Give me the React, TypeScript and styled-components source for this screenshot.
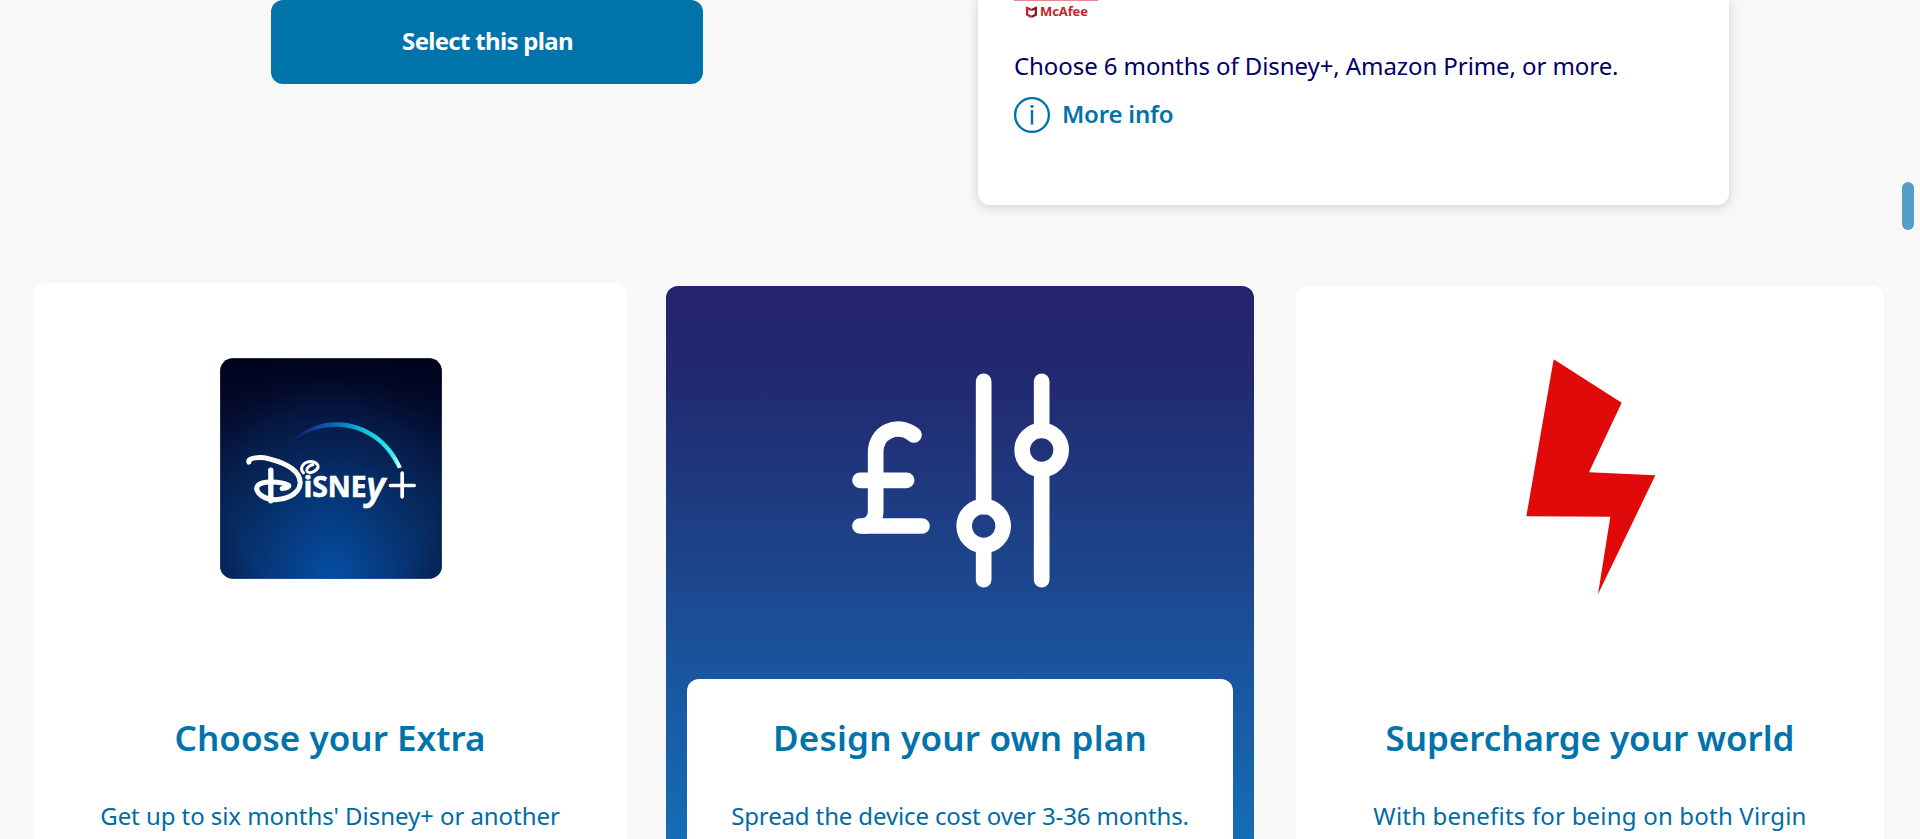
import React from "react";
import styled, { createGlobalStyle } from "styled-components";

const GlobalStyle = createGlobalStyle`
  * { box-sizing: border-box; }
  body {
    margin: 0;
    background: #f8f8f8;
    font-family: "Noto Sans", "Open Sans", sans-serif;
    overflow: hidden;
  }
`;

const Page = styled.main`
  position: relative;
  height: 839px;
  overflow: hidden;
  background: #f8f8f8;
`;

const PlanRow = styled.section`
  display: flex;
  align-items: flex-start;
  justify-content: space-between;
  height: 205px;
  padding: 0 191px 0 271px;
`;

const SelectButton = styled.button`
  width: 432px;
  height: 84px;
  padding: 0 0 3px 1px;
  border: 0;
  border-radius: 12px;
  background: #0073ab;
  color: #fff;
  font: 700 24px/32px "Noto Sans", sans-serif;
  letter-spacing: -0.69px;
`;

const PlanPanel = styled.div`
  width: 751px;
  height: 205px;
  padding: 0 36px;
  border-radius: 0 0 12px 12px;
  background: #fff;
  box-shadow: 0 2px 12px rgba(0, 0, 0, 0.17);
`;

const BrandTile = styled.div`
  display: flex;
  align-items: flex-start;
  gap: 3px;
  width: 84px;
  height: 50px;
  padding: 5px 0 0 12px;
  border-top: 1px solid #e38a8e;
  color: #c3262b;
  font: 700 13px/11px "Noto Sans", sans-serif;
  letter-spacing: -0.1px;
`;

const PlanText = styled.p`
  margin: 0;
  color: #000066;
  font-size: 24px;
  line-height: 32px;
  letter-spacing: -0.08px;
  white-space: nowrap;
`;

const MoreInfo = styled.a`
  display: flex;
  align-items: center;
  gap: 12px;
  height: 36px;
  margin-top: 15px;
  color: #0073ab;
  font-size: 24px;
  font-weight: 650;
  line-height: 32px;
  letter-spacing: -0.2px;
`;

const MoreInfoLabel = styled.span`
  padding-bottom: 2px;
`;

const Cards = styled.section`
  display: grid;
  grid-template-columns: 594px 588px 1fr;
  column-gap: 39px;
  align-items: end;
  height: 700px;
  margin-top: 78px;
  padding: 0 36px 0 33px;
`;

const Card = styled.article<{ $raised?: boolean; $featured?: boolean }>`
  justify-self: end;
  width: ${(p) => (p.$raised ? 594 : 588)}px;
  height: ${(p) => (p.$raised ? 700 : 697)}px;
  padding: 0 21px;
  border-radius: 12px;
  background: ${(p) =>
    p.$featured
      ? "linear-gradient(180deg, #25236b 0, #22296f 90px, #1f377e 190px, #1c4990 310px, #1957a0 395px, #146db5 553px)"
      : "#fff"};
`;

const Artwork = styled.div<{ $raised?: boolean; $top: number; $shift?: number }>`
  display: flex;
  justify-content: center;
  height: ${(p) => (p.$raised ? 396 : 393)}px;
  padding-top: ${(p) => p.$top}px;
  padding-left: ${(p) => p.$shift ?? 0}px;
`;

const CardBody = styled.div`
  height: 304px;
  padding-top: 35px;
  border-radius: 12px 12px 0 0;
  background: #fff;
  color: #0073ab;
  text-align: center;
  white-space: nowrap;
`;

const CardTitle = styled.h2<{ $tracking: number }>`
  margin: 0 0 38px;
  font-size: 35px;
  font-weight: 600;
  line-height: 48px;
  letter-spacing: ${(p) => p.$tracking}px;
`;

const CardText = styled.p<{ $tracking: number }>`
  margin: 0;
  color: #006ca5;
  font-size: 24px;
  line-height: 32px;
  letter-spacing: ${(p) => p.$tracking}px;
`;

const ScrollThumb = styled.div`
  position: absolute;
  top: 182px;
  right: 6px;
  width: 12px;
  height: 48px;
  border-radius: 6px;
  background: #549fc5;
`;

const ShieldIcon = () => (
  <svg width="11" height="12" viewBox="0 0 11 12" fill="none">
    <path d="M0 0.3 L5.5 2.8 V5.2 L2.3 3.8 V8.1 L5.5 9.6 V12 L0 9.4 Z" fill="#c3262b" />
    <path d="M11 0.3 L5.5 2.8 V5.2 L8.7 3.8 V8.1 L5.5 9.6 V12 L11 9.4 Z" fill="#86191d" />
  </svg>
);

const InfoIcon = () => (
  <svg width="36" height="36" viewBox="0 0 36 36" fill="none">
    <circle cx="18" cy="18" r="16.9" stroke="#0073ab" strokeWidth="2.3" />
    <rect x="16.8" y="13" width="2.4" height="14.5" fill="#0073ab" />
    <rect x="16.4" y="8" width="3.2" height="2.8" rx="1" fill="#0073ab" />
  </svg>
);

const DisneyLogo = () => (
  <svg width="222" height="221" viewBox="59.5 53.5 666 663">
    <defs>
      <linearGradient id="night" x1="0" y1="0" x2="0" y2="1">
        <stop offset="0" stopColor="#02031f" />
        <stop offset="0.4" stopColor="#061843" />
        <stop offset="0.75" stopColor="#07295c" />
        <stop offset="1" stopColor="#083070" />
      </linearGradient>
      <radialGradient id="glow" cx="0.5" cy="1" r="0.95" gradientTransform="translate(.5 1) scale(.75 1) translate(-.5 -1)">
        <stop offset="0" stopColor="#054fa4" />
        <stop offset="0.35" stopColor="#063e86" stopOpacity="0.8" />
        <stop offset="0.7" stopColor="#062c63" stopOpacity="0.4" />
        <stop offset="1" stopColor="#062050" stopOpacity="0" />
      </radialGradient>
      <radialGradient id="edge" cx="0.5" cy="0.65" r="0.8">
        <stop offset="0.55" stopColor="#01021c" stopOpacity="0" />
        <stop offset="1" stopColor="#01021c" stopOpacity="0.6" />
      </radialGradient>
      <linearGradient id="arc" x1="250" y1="0" x2="602" y2="0" gradientUnits="userSpaceOnUse">
        <stop offset="0" stopColor="#10207c" stopOpacity="0" />
        <stop offset="0.2" stopColor="#122f94" />
        <stop offset="0.45" stopColor="#0a6cb8" />
        <stop offset="0.7" stopColor="#10c4dc" />
        <stop offset="0.93" stopColor="#2ef0ed" />
        <stop offset="1" stopColor="#fff" />
      </linearGradient>
    </defs>
    <rect x="60" y="54" width="665" height="662" rx="38" fill="url(#night)" />
    <rect x="60" y="54" width="665" height="662" rx="38" fill="url(#glow)" />
    <rect x="60" y="54" width="665" height="662" rx="38" fill="url(#edge)" />
    <path d="M250 323 C320 256 365 246 412 246 C500 248 572 303 605 381 L593 385 C557 309 495 263 410 260 C350 262 310 276 250 323 Z" fill="url(#arc)" />
    <g fill="none" stroke="#fff" strokeLinecap="round" strokeLinejoin="round">
      <path d="M146 366 C142 352 180 349 207 356 C265 370 302 397 300 430 C297 463 250 486 205 476 C180 469 162 450 173 436 C187 420 243 424 265 435 C270 439 258 444 246 445" strokeWidth="15" />
      <path d="M212 390 V482" strokeWidth="16" />
      <path d="M310 398 C296 384 310 364 333 364 C352 366 360 379 348 389 C336 401 322 399 320 391 C319 382 330 375 338 374" strokeWidth="9" />
      <path d="M571 436 H642 M606 399 V470" strokeWidth="11" />
    </g>
    <text
      x="311"
      y="470"
      fill="#fff"
      stroke="#fff"
      strokeWidth="2"
      fontFamily="Noto Sans, sans-serif"
      fontSize="88"
      fontWeight="700"
      textLength="244"
      lengthAdjust="spacingAndGlyphs"
    >
      iSNE<tspan fontSize="116" fontWeight="600" fontStyle="italic" dy="8">y</tspan>
    </text>
  </svg>
);

const PoundSlidersIcon = () => (
  <svg width="220" height="218" viewBox="60 66 660 654" fill="none" stroke="#fff" strokeWidth="47" strokeLinecap="round">
    <path d="M252 255 C202 216 137 246 137 307 V484 C137 504 126 522 104 528" />
    <path d="M90 391 H230 M90 528 H276" />
    <path d="M461 94 V470 M461 590 V689 M635 94 V240 M635 362 V689" />
    <circle cx="461" cy="528" r="58.5" />
    <circle cx="635" cy="300" r="58.5" />
  </svg>
);

const BoltIcon = () => (
  <svg width="130" height="236" viewBox="108 56 390 708">
    <path d="M191 57 L395 187 L297 396 L496 405 L324 762 L361 529 L109 528 Z" fill="#e10a0a" />
  </svg>
);

export default function App() {
  return (
    <Page>
      <GlobalStyle />
      <PlanRow>
        <SelectButton>Select this plan</SelectButton>
        <PlanPanel>
          <BrandTile>
            <ShieldIcon />
            McAfee
          </BrandTile>
          <PlanText>Choose 6 months of Disney+, Amazon Prime, or more.</PlanText>
          <MoreInfo>
            <InfoIcon />
            <MoreInfoLabel>More info</MoreInfoLabel>
          </MoreInfo>
        </PlanPanel>
      </PlanRow>
      <Cards>
        <Card $raised>
          <Artwork $raised $top={75} $shift={1}>
            <DisneyLogo />
          </Artwork>
          <CardBody>
            <CardTitle $tracking={0.03}>Choose your Extra</CardTitle>
            <CardText $tracking={-0.06}>Get up to six months' Disney+ or another</CardText>
          </CardBody>
        </Card>
        <Card $featured>
          <Artwork $top={86}>
            <PoundSlidersIcon />
          </Artwork>
          <CardBody>
            <CardTitle $tracking={0.2}>Design your own plan</CardTitle>
            <CardText $tracking={-0.13}>Spread the device cost over 3-36 months.</CardText>
          </CardBody>
        </Card>
        <Card>
          <Artwork $top={73} $shift={2}>
            <BoltIcon />
          </Artwork>
          <CardBody>
            <CardTitle $tracking={-0.06}>Supercharge your world</CardTitle>
            <CardText $tracking={0.2}>With benefits for being on both Virgin</CardText>
          </CardBody>
        </Card>
      </Cards>
      <ScrollThumb />
    </Page>
  );
}
